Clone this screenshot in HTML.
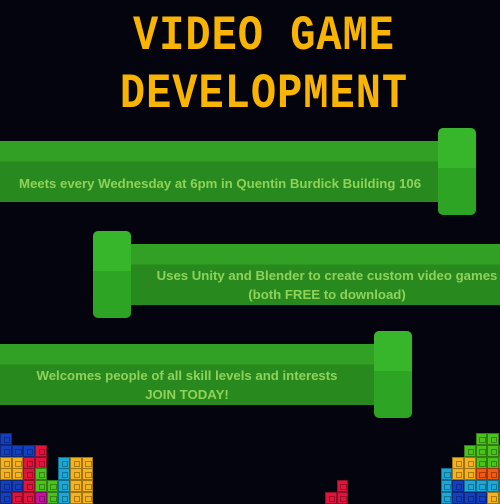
<!DOCTYPE html>
<html><head><meta charset="utf-8"><style>
*{margin:0;padding:0;box-sizing:border-box}
body{width:500px;height:500px;background:#04040f;position:relative;overflow:hidden;font-family:"Liberation Sans",sans-serif}
.t{position:absolute;left:14px;width:500px;text-align:center;color:#f8b400;font-family:"Liberation Mono",monospace;font-weight:bold;font-size:42px;letter-spacing:1px;transform:scaleY(1.18);line-height:42px}
.bar{position:absolute;height:61px;background:linear-gradient(#31a024 0,#31a024 34%,#288a1e 34%)}
.cap{position:absolute;width:38px;height:87px;border-radius:5px;background:linear-gradient(#37b62b 0,#37b62b 46%,#2da423 46%)}
.txt{position:absolute;color:#8fd25a;font-weight:bold;font-size:13.2px;line-height:19px;text-align:center}
.b{position:absolute;width:11.7px;height:11.7px;border:1px solid rgba(0,0,0,.35)}
.b::after{content:"";position:absolute;left:2.5px;top:2.5px;width:4.7px;height:4.7px;border:1px solid rgba(0,0,0,.3)}
</style></head><body>
<div class="t" style="top:15px">VIDEO GAME</div>
<div class="t" style="top:73px">DEVELOPMENT</div>

<div class="bar" style="left:0;top:141px;width:440px"></div>
<div class="cap" style="left:438px;top:128px"></div>
<div class="txt" style="left:0;width:440px;top:174px">Meets every Wednesday at 6pm in Quentin Burdick Building 106</div>

<div class="bar" style="left:130px;top:244px;width:370px"></div>
<div class="cap" style="left:93px;top:231px"></div>
<div class="txt" style="left:127px;width:400px;top:266px">Uses Unity and Blender to create custom video games<br>(both FREE to download)</div>

<div class="bar" style="left:0;top:344px;width:376px"></div>
<div class="cap" style="left:374px;top:331px"></div>
<div class="txt" style="left:0;width:374px;top:366px">Welcomes people of all skill levels and interests<br>JOIN TODAY!</div>

<div id="blocks"></div>
<script>
var B='#1440c0',R='#e0143c',Y='#f5b21c',G='#4cc21c',C='#1aa8d8',M='#c0149c',O='#f05a14';
var cols=[0,11.7,23.3,35,46.7,58.3,70,81.7],rows=[433,445,457,468,480,492];
var L=[[B],[B,B,B,R],[Y,Y,R,R,0,C,Y,Y],[Y,Y,R,G,0,C,Y,Y],[B,B,R,G,G,C,Y,Y],[B,R,R,M,G,C,Y,Y]];
var rc=[440.7,452.3,464,475.7,487.3,499];
var Rt=[[0,0,0,G,G,0],[0,0,G,G,G,G],[0,Y,Y,G,G,Y],[C,Y,Y,O,O,O],[C,B,C,C,C,C],[C,B,B,B,Y,Y]];
var h='';
function add(x,y,c){if(c)h+='<div class="b" style="left:'+x+'px;top:'+y+'px;background:'+c+'"></div>';}
L.forEach(function(r,i){r.forEach(function(c,j){add(cols[j],rows[i],c)})});
Rt.forEach(function(r,i){r.forEach(function(c,j){add(rc[j],rows[i],c)})});
add(336.7,480,R);add(325,492,R);add(336.7,492,R);
document.getElementById('blocks').innerHTML=h;
</script>
</body></html>
